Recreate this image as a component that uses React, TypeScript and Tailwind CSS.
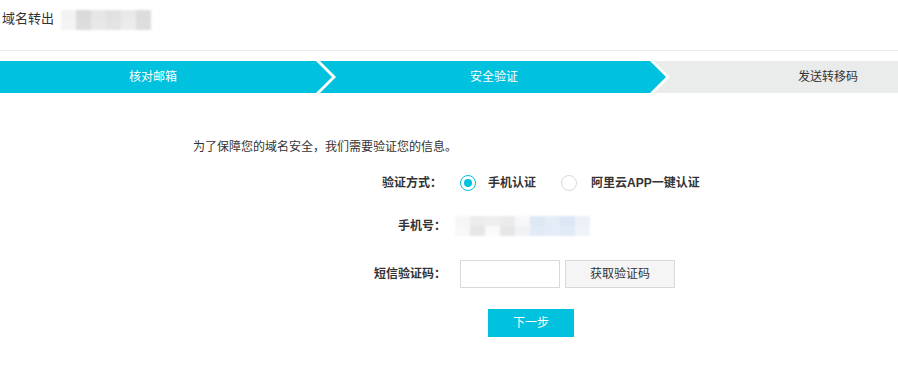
const cyan = "bg-[#00c1de]";

function Mosaic({ cells, className }: { cells: string[][]; className?: string }) {
  return (
    <div className={`flex flex-col blur-[1px] ${className ?? ""}`}>
      {cells.map((row, i) => (
        <div key={i} className="flex">
          {row.map((c, j) => (
            <div key={j} className="h-[10px] w-[15px]" style={{ background: c }} />
          ))}
        </div>
      ))}
    </div>
  );
}

function Arrow({ bg }: { bg: string }) {
  return (
    <svg width="22" height="32" viewBox="0 0 22 32" className={`shrink-0 ${bg}`} aria-hidden>
      <polygon points="0,0 4,0 20,16 4,32 0,32" fill="#ffffff" />
      <polygon points="0,0 16,16 0,32" fill="#00c1de" />
    </svg>
  );
}

function Radio({ checked }: { checked?: boolean }) {
  return (
    <span
      className={`flex size-4 items-center justify-center rounded-full border-[1.5px] ${
        checked ? "border-[#00c1de]" : "border-[#d9d9d9]"
      }`}
    >
      {checked && <span className="size-2 rounded-full bg-[#00c1de]" />}
    </span>
  );
}

export default function App() {
  return (
    <div
      className="h-[385px] w-[898px] overflow-hidden bg-white text-[#333]"
      style={{ fontFamily: '"Liberation Sans", "Noto Sans CJK SC", sans-serif' }}
    >
      {/* header */}
      <div className="h-[51px] border-b border-[#ebebeb] pt-[8px]">
        <div className="flex items-center">
          <span className="pl-[2px] text-[13px] leading-[18px]">域名转出</span>
          <Mosaic
            className="ml-[7px] mt-[2px]"
            cells={[
              ["#f2f2f2", "#dadada", "#e6e6e6", "#e1e1e3", "#e9e9e9", "#dcdcdc"],
              ["#f4f4f4", "#dddddd", "#e8e8e8", "#e3e3e4", "#ececec", "#dedede"],
            ]}
          />
        </div>
      </div>

      {/* steps */}
      <div className="mt-[10px] flex h-[32px] w-[990px] text-[12px] leading-[32px]">
        <div className={`${cyan} w-[316px] pr-[10px] text-center text-white`}>核对邮箱</div>
        <Arrow bg="bg-[#00c1de]" />
        <div className={`${cyan} w-[312px] text-center text-white`}>安全验证</div>
        <Arrow bg="bg-[#eaebeb]" />
        <div className="w-[312px] bg-[#eaebeb] text-center text-[#333]">发送转移码</div>
        <div className="flex-1 bg-[#eaebeb]" />
      </div>

      {/* form */}
      <div className="mt-[45px] pl-[193px] text-[12px] leading-[18px]">
        为了保障您的域名安全，我们需要验证您的信息。
      </div>

      <div className="mt-[17px] flex h-[20px] items-center text-[12px]">
        <div className="w-[446px] pr-[4px] text-right font-bold">验证方式：</div>
        <div className="ml-[14px] flex items-center">
          <Radio checked />
          <span className="ml-[12px] font-bold">手机认证</span>
          <span className="ml-[25px]">
            <Radio />
          </span>
          <span className="ml-[14px] font-bold">阿里云APP一键认证</span>
        </div>
      </div>

      <div className="mt-[23px] flex h-[20px] items-center text-[12px]">
        <div className="w-[446px] text-right font-bold">手机号：</div>
        <Mosaic
          className="ml-[9px]"
          cells={[
            ["#f7f6f7", "#ececec", "#eeeeee", "#ebebeb", "#f7f7f9", "#dde8f5", "#e4ecf6", "#dbe7f5", "#ecf1f8", "#ffffff"],
            ["#f8f8f9", "#e6e6e6", "#fafafa", "#e6e6e6", "#f1f2f5", "#e1ebf6", "#e4ecf7", "#e1ebf6", "#eef3f9", "#ffffff"],
          ]}
        />
      </div>

      <div className="mt-[24px] flex h-[28px] items-center text-[12px]">
        <div className="w-[446px] text-right font-bold">短信验证码：</div>
        <input className="ml-[14px] h-[28px] w-[100px] border border-[#d9d9d9] px-2 outline-none" />
        <button className="ml-[5px] h-[28px] w-[110px] border border-[#d9d9d9] bg-[#f5f5f5] text-[12px] text-[#333]">
          获取验证码
        </button>
      </div>

      <div className="mt-[21px] pl-[488px]">
        <button className={`${cyan} h-[28px] w-[86px] text-[12px] text-white`}>下一步</button>
      </div>
    </div>
  );
}
